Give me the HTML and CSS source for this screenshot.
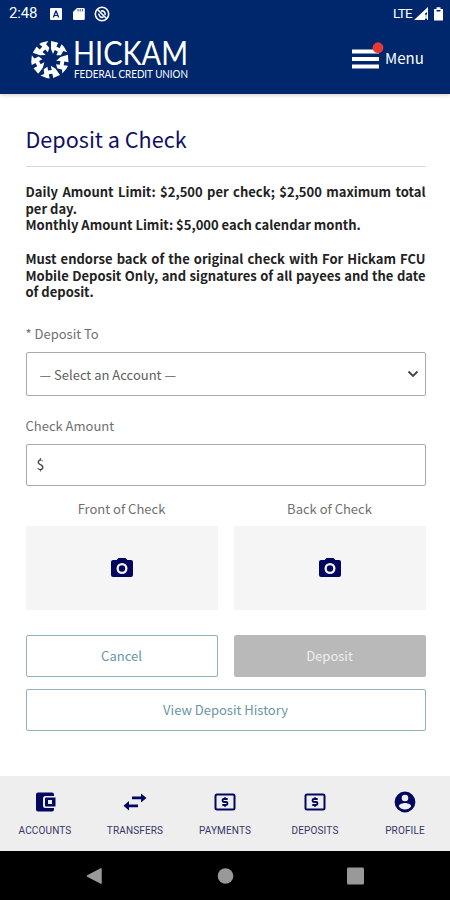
FILE: index.html
```html
<!DOCTYPE html>
<html lang="en">
<head>
<meta charset="utf-8">
<title>Deposit a Check</title>
<link rel="stylesheet" href="styles.css">
</head>
<body>
<div class="screen">
  <header class="header">
    <div class="status">
      <span class="clock">2:48</span>
      <svg class="status-icons" width="64" height="18" viewBox="0 0 64 18">
        <path fill="#fff" fill-rule="evenodd" d="M5 3h10a1 1 0 0 1 1 1v10a1 1 0 0 1-1 1H5a1 1 0 0 1-1-1V4a1 1 0 0 1 1-1zM9.300 5.500L6.700 12.500h1.400l.5-1.500h2.800l.5 1.500h1.400L10.700 5.500zM10 7.200l.9 2.700H9.100z"/>
        <path fill="#fff" d="M31 3h6.500q1.300 0 1.300 1.300v9.400q0 1.300-1.300 1.300H28.300Q27 15 27 13.700V7z"/><path d="M32 4v2.500M34.200 4v2.500M36.400 4v2.500" stroke="#00266b" stroke-width=".8"/>
        <g fill="none" stroke="#fff" stroke-width="1.600"><circle cx="56" cy="9" r="6.700"/><path d="M51.500 4.500l9.500 9.500M53 8.500a3.200 3.200 0 0 0 4.500 3.500M55 6a3.200 3.200 0 0 1 4 4"/></g>
      </svg>
      <span class="lte">LTE</span>
      <svg class="signal" width="32" height="16" viewBox="0 0 32 16">
        <path fill="#fff" d="M0 14L14 1v4.500l-3 2V14z"/><path d="M10.500 8l3 5.500M13.500 8l-3 5.500M13.500 4v10" stroke="#fff" stroke-width="1"/>
        <path fill="#fff" d="M20 3h2.500V1.200h4V3H29v11.500h-9z"/><path fill="#00266b" d="M22.500 4h4v1.500h-4z"/>
      </svg>
    </div>
    <div class="brand-row">
      <svg class="logo" width="164" height="48" viewBox="0 0 164 48">
        <defs>
          <path id="segment" d="M-6.300 9.800L-2.600 7.200-1.900 10.900 1.700 10.400.8 6.200 5.600 9.300 10 15.600 3.200 18.400 2.400 14.200-1.200 14.800-.4 19-3.500 18.600-9.600 16-5.800 14.600z"/>
        </defs>
        <g fill="#fff" transform="translate(21 22.500)">
          <use href="#segment"/><use href="#segment" transform="rotate(72)"/><use href="#segment" transform="rotate(144)"/><use href="#segment" transform="rotate(216)"/><use href="#segment" transform="rotate(288)"/>
        </g>
        <text class="word" x="44" y="28" textLength="115" lengthAdjust="spacingAndGlyphs">HICKAM</text>
        <text class="tag" x="45" y="40.500" textLength="114" lengthAdjust="spacingAndGlyphs">FEDERAL CREDIT UNION</text>
      </svg>
      <div class="menu">
        <svg width="33" height="30" viewBox="0 0 33 30"><path fill="#fff" d="M0 7.500h27v4H0zM0 15h27v4H0zM0 22.500h27v4H0z"/><circle cx="26" cy="5.700" r="5.400" fill="#e53935"/></svg>
        <span>Menu</span>
      </div>
    </div>
  </header>
  <main class="content">
    <h1><span>Deposit a Check</span></h1>
    <div class="limits">
      <p>Daily Amount Limit: $2,500 per check; $2,500 maximum total per day.</p>
      <p>Monthly Amount Limit: $5,000 each calendar month.</p>
      <p class="endorse">Must endorse back of the original check with For Hickam FCU Mobile Deposit Only, and signatures of all payees and the date of deposit.</p>
    </div>
    <div class="label to"><span>* Deposit To</span></div>
    <div class="field select"><span>— Select an Account —</span>
      <svg width="12" height="8" viewBox="0 0 12 8"><path d="M1.500 1.500L6 6l4.500-4.500" fill="none" stroke="#444" stroke-width="1.900"/></svg>
    </div>
    <div class="label amount"><span>Check Amount</span></div>
    <div class="field money">$</div>
    <div class="grid photos">
      <div><div class="caption">Front of Check</div><div class="photo"><svg width="22" height="20" viewBox="0 0 22 20"><path fill="#03065f" fill-rule="evenodd" d="M7.500 0h7l1.800 2H20a2 2 0 0 1 2 2v13a2 2 0 0 1-2 2H2a2 2 0 0 1-2-2V4a2 2 0 0 1 2-2h3.700zM11 5a5.500 5.500 0 1 0 0 11 5.500 5.500 0 0 0 0-11zm0 2.300a3.200 3.200 0 1 1 0 6.400 3.200 3.200 0 0 1 0-6.400z"/></svg></div></div>
      <div><div class="caption">Back of Check</div><div class="photo"><svg width="22" height="20" viewBox="0 0 22 20"><path fill="#03065f" fill-rule="evenodd" d="M7.500 0h7l1.800 2H20a2 2 0 0 1 2 2v13a2 2 0 0 1-2 2H2a2 2 0 0 1-2-2V4a2 2 0 0 1 2-2h3.700zM11 5a5.500 5.500 0 1 0 0 11 5.500 5.500 0 0 0 0-11zm0 2.300a3.200 3.200 0 1 1 0 6.400 3.200 3.200 0 0 1 0-6.400z"/></svg></div></div>
    </div>
    <div class="grid actions">
      <div class="button">Cancel</div>
      <div class="button disabled">Deposit</div>
      <div class="button wide">View Deposit History</div>
    </div>
  </main>
  <nav class="tabs">
    <div class="tab"><svg width="24" height="24" viewBox="0 0 24 24"><path fill="#03065f" fill-rule="evenodd" d="M5 2.500h14a2 2 0 0 1 2 2V6h-8.500a2.500 2.500 0 0 0-2.500 2.500v7a2.500 2.500 0 0 0 2.500 2.500H21v1.500a2 2 0 0 1-2 2H5a2 2 0 0 1-2-2v-15a2 2 0 0 1 2-2zM13 7.500h9.500v9H13a1 1 0 0 1-1-1v-7a1 1 0 0 1 1-1zm2 2.500v4h4v-4z"/></svg><span>ACCOUNTS</span></div>
    <div class="tab"><svg width="24" height="24" viewBox="0 0 24 24"><path fill="#03065f" d="M9 6.500h9V3.500L23.500 8 18 12.500V9.300H9zM15 14.500H6V11L.5 15.700 6 20.500v-3.300h9z"/></svg><span>TRANSFERS</span></div>
    <div class="tab"><svg width="24" height="24" viewBox="0 0 24 24"><rect x="2.500" y="4.500" width="19" height="15" rx="1.500" fill="none" stroke="#03065f" stroke-width="2"/><path d="M14.700 9H11q-1.500 0-1.500 1.500T11 12h2q1.500 0 1.500 1.500T13 15H9.300M12 7.300V9M12 15v1.700" fill="none" stroke="#03065f" stroke-width="1.800"/></svg><span>PAYMENTS</span></div>
    <div class="tab"><svg width="24" height="24" viewBox="0 0 24 24"><rect x="2.500" y="4.500" width="19" height="15" rx="1.500" fill="none" stroke="#03065f" stroke-width="2"/><path d="M14.700 9H11q-1.500 0-1.500 1.500T11 12h2q1.500 0 1.500 1.500T13 15H9.300M12 7.300V9M12 15v1.700" fill="none" stroke="#03065f" stroke-width="1.800"/></svg><span>DEPOSITS</span></div>
    <div class="tab"><svg width="24" height="24" viewBox="0 0 24 24"><path fill="#03065f" fill-rule="evenodd" d="M12 1.600a10.400 10.400 0 1 0 0 20.800 10.400 10.400 0 0 0 0-20.800zM12 4.700a3.300 3.300 0 1 1 0 6.600 3.300 3.300 0 0 1 0-6.600zM12 19.500a7.500 7.500 0 0 1-6.200-3.300c.1-2 4.200-3.200 6.200-3.200s6.100 1.200 6.200 3.200A7.500 7.500 0 0 1 12 19.500z"/></svg><span>PROFILE</span></div>
  </nav>
  <footer class="system">
    <svg width="17" height="18" viewBox="0 0 17 18"><path d="M1.500 9L15 1.800v14.400z" fill="#999" stroke="#999" stroke-width="1.500" stroke-linejoin="round"/></svg>
    <svg width="17" height="18" viewBox="0 0 17 18"><circle cx="8.500" cy="9" r="7.800" fill="#999"/></svg>
    <svg width="17" height="18" viewBox="0 0 17 18"><rect y=".5" width="17" height="17" rx="1.500" fill="#999"/></svg>
  </footer>
</div>
</body>
</html>
```
FILE: styles.css
```css
* { box-sizing: border-box; }
body { margin: 0; background: #fff; font-family: "Noto Sans CJK SC", "Open Sans", sans-serif; }
svg { display: block; flex: none; overflow: visible; }
h1, p { margin: 0; }
.screen { width: 450px; height: 900px; display: flex; flex-direction: column; overflow: hidden; }
.header { height: 94px; background: #00266b; box-shadow: 0 1px 4px #0003; flex: none; }
.status { height: 27px; padding: 0 7px 0 9px; display: flex; align-items: center; color: #fff; font: 16px/27px Roboto, sans-serif; }
.clock { width: 37px; font-size: 15px; letter-spacing: -.2px; }
.lte { margin-left: auto; margin-right: 2px; font-size: 13.500px; letter-spacing: -.7px; }
.status svg.signal { margin-right: -3px; }
.brand-row { display: flex; justify-content: space-between; padding: 10px 27px 0 29px; }
.word { fill: #fff; font: 33px "Lato", sans-serif; }
.tag { fill: #fff; font: 11px "Lato", sans-serif; }
.menu { display: flex; color: #fff; font-size: 15px; line-height: 30px; padding-top: 5px; }
.menu span { padding-top: 1px; width: 38px; white-space: nowrap; }
.content { height: 682px; padding: 30px 24.500px 0 25.500px; flex: none; }
h1 { height: 43px; border-bottom: 1px solid #d8d8d8; color: #120f66; font-size: 21.600px; line-height: 30px; font-weight: 400; }
.limits { margin-top: 17px; color: #222; font-size: 13px; font-weight: 700; line-height: 16.700px; text-align: justify; height: 134px; }
.endorse { margin-top: 16.700px; }
.label { color: #707070; font-size: 13px; line-height: 20px; }
.label.to { height: 34px; padding-top: 6px; }
.field { border: 1px solid #aaa; border-radius: 2px; display: flex; align-items: center; }
.select { height: 44px; padding: 0 6px 0 13px; justify-content: space-between; color: #606060; font-size: 13px; }
.label.amount { margin-top: 20px; height: 28px; }
.money { height: 42px; padding: 0 0 2px 10px; color: #333; font-size: 14px; }
.grid { display: grid; grid-template-columns: 192px 192px; justify-content: space-between; }
.caption { height: 40px; padding-top: 13px; line-height: 20px; text-align: center; color: #707070; font-size: 13px; }
.photo { height: 84px; background: #f5f5f5; display: flex; align-items: center; justify-content: center; }
.actions { margin-top: 25px; row-gap: 12px; }
.button { height: 42px; border: 1px solid #91b1bf; border-radius: 2px; color: #6796a5; font-size: 13px; line-height: 39px; text-align: center; }
.disabled { background: #b9b9b9; border-color: #b9b9b9; color: #eee; }
.wide { grid-column: 1 / -1; }
.tabs { height: 75px; background: #eee; display: grid; grid-template-columns: repeat(5, 1fr); flex: none; }
.tab { display: flex; flex-direction: column; align-items: center; padding-top: 14px; color: #353568; font: 10px/14px Roboto, sans-serif; letter-spacing: .15px; gap: 10px; }
.system { height: 49px; background: #000; display: flex; justify-content: space-between; align-items: center; padding: 0 86px; flex: none; }
```
